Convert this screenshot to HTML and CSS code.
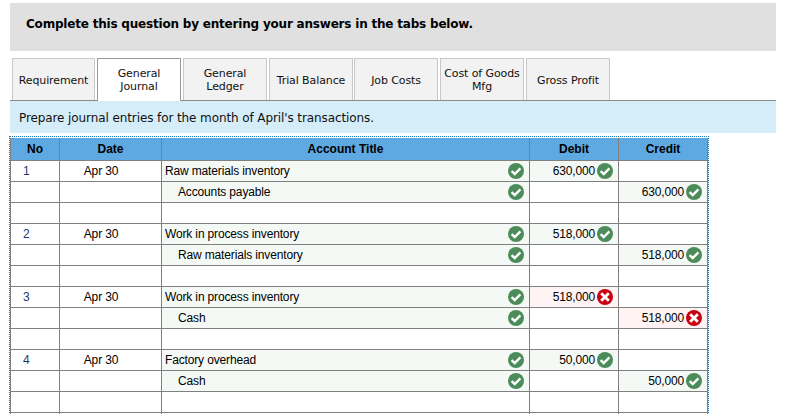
FILE: index.html
```html
<!DOCTYPE html>
<html lang="en">
<head>
<meta charset="utf-8">
<title>General Journal</title>
<link rel="stylesheet" href="styles.css">
</head>
<body>
<svg class="defs" width="0" height="0" aria-hidden="true">
  <symbol id="ok" viewBox="0 0 16 16">
    <circle cx="8" cy="8" r="8" fill="#4c8c5b"/>
    <path d="M3.6 8.2 6.7 11 12.4 5.4" fill="none" stroke="#fff" stroke-width="2.4"/>
  </symbol>
  <symbol id="bad" viewBox="0 0 16 16">
    <circle cx="8" cy="8" r="8" fill="#c8000f"/>
    <path d="M4.2 4.2 11.8 11.8M11.8 4.2 4.2 11.8" fill="none" stroke="#fff" stroke-width="2.8"/>
  </symbol>
</svg>
<main class="page">
  <header class="banner">Complete this question by entering your answers in the tabs below.</header>
  <nav class="tabs">
    <div class="tab">Requirement</div>
    <div class="tab active">General<br>Journal</div>
    <div class="tab">General<br>Ledger</div>
    <div class="tab">Trial Balance</div>
    <div class="tab">Job Costs</div>
    <div class="tab">Cost of Goods<br>Mfg</div>
    <div class="tab">Gross Profit</div>
  </nav>
  <p class="prompt">Prepare journal entries for the month of April's transactions.</p>
  <div class="sheet">
    <table class="journal">
      <colgroup><col class="c-no"><col class="c-date"><col class="c-title"><col class="c-amt"><col class="c-amt"></colgroup>
      <thead>
        <tr><th>No</th><th>Date</th><th>Account Title</th><th>Debit</th><th>Credit</th></tr>
      </thead>
      <tbody>
        <tr><td class="no">1</td><td class="date">Apr 30</td><td class="good"><div class="acct">Raw materials inventory<svg class="ic"><use href="#ok"/></svg></div></td><td class="good"><div class="amt">630,000<svg class="ic"><use href="#ok"/></svg></div></td><td></td></tr>
        <tr><td></td><td></td><td class="good"><div class="acct sub">Accounts payable<svg class="ic"><use href="#ok"/></svg></div></td><td></td><td class="good"><div class="amt">630,000<svg class="ic"><use href="#ok"/></svg></div></td></tr>
        <tr><td></td><td></td><td></td><td></td><td></td></tr>
        <tr><td class="no">2</td><td class="date">Apr 30</td><td class="good"><div class="acct">Work in process inventory<svg class="ic"><use href="#ok"/></svg></div></td><td class="good"><div class="amt">518,000<svg class="ic"><use href="#ok"/></svg></div></td><td></td></tr>
        <tr><td></td><td></td><td class="good"><div class="acct sub">Raw materials inventory<svg class="ic"><use href="#ok"/></svg></div></td><td></td><td class="good"><div class="amt">518,000<svg class="ic"><use href="#ok"/></svg></div></td></tr>
        <tr><td></td><td></td><td></td><td></td><td></td></tr>
        <tr><td class="no">3</td><td class="date">Apr 30</td><td class="good"><div class="acct">Work in process inventory<svg class="ic"><use href="#ok"/></svg></div></td><td class="wrong"><div class="amt">518,000<svg class="ic"><use href="#bad"/></svg></div></td><td></td></tr>
        <tr><td></td><td></td><td class="good"><div class="acct sub">Cash<svg class="ic"><use href="#ok"/></svg></div></td><td></td><td class="wrong"><div class="amt">518,000<svg class="ic"><use href="#bad"/></svg></div></td></tr>
        <tr><td></td><td></td><td></td><td></td><td></td></tr>
        <tr><td class="no">4</td><td class="date">Apr 30</td><td class="good"><div class="acct">Factory overhead<svg class="ic"><use href="#ok"/></svg></div></td><td class="good"><div class="amt">50,000<svg class="ic"><use href="#ok"/></svg></div></td><td></td></tr>
        <tr><td></td><td></td><td class="good"><div class="acct sub">Cash<svg class="ic"><use href="#ok"/></svg></div></td><td></td><td class="good"><div class="amt">50,000<svg class="ic"><use href="#ok"/></svg></div></td></tr>
        <tr><td></td><td></td><td></td><td></td><td></td></tr>
        <tr><td></td><td></td><td></td><td></td><td></td></tr>
      </tbody>
    </table>
  </div>
</main>
</body>
</html>
```
FILE: styles.css
```css
html, body {
  margin: 0;
  height: 414px;
  overflow: hidden;
  background: #fff;
}
.defs { display: block; height: 0; }
.page {
  width: 766px;
  padding: 3px 0 0 10px;
  font-family: "DejaVu Sans", Verdana, sans-serif;
  color: #111;
}
.banner {
  height: 48px;
  box-sizing: border-box;
  padding: 13px 0 0 16px;
  background: #e0e0e0;
  font-size: 12px;
  letter-spacing: -0.2px;
  line-height: 17px;
  font-weight: 700;
  color: #000;
}
.tabs {
  display: flex;
  gap: 2px;
  height: 43px;
  box-sizing: border-box;
  margin-top: 7px;
  padding-left: 2px;
  border-bottom: 1px solid #8a8a8a;
}
.tab {
  width: 84px;
  height: 42px;
  box-sizing: border-box;
  display: flex;
  align-items: center;
  justify-content: center;
  text-align: center;
  padding-top: 1px;
  border: 1px solid #c8c8c8;
  border-bottom: 0;
  background: #f2f2f2;
  font-size: 11px;
  letter-spacing: -0.1px;
  line-height: 13px;
}
.tab:nth-child(1) { width: 83px; }
.tab:nth-child(5) { margin-left: -1px; }
.tab.active {
  height: 43px;
  padding-bottom: 1px;
  background: #fff;
  border-color: #9a9a9a;
  position: relative;
  z-index: 1;
}
.prompt {
  margin: 0;
  height: 32px;
  box-sizing: border-box;
  padding: 2px 0 0 9px;
  background: #d5edf9;
  font-size: 12px;
  letter-spacing: -0.1px;
  line-height: 30px;
}
.sheet {
  width: 698px;
  height: 277px;
  margin: 3px 0 0 -1px;
  padding-top: 1px;
  overflow: hidden;
  border-top: 1px dotted #1273b8;
  border-left: 1px dotted #1273b8;
  border-right: 1px dotted #1273b8;
}
.journal {
  width: 698px;
  border-collapse: collapse;
  table-layout: fixed;
  font-family: "Liberation Sans", Arial, sans-serif;
  font-size: 12px;
  color: #000;
}
.c-no { width: 49px; }
.c-date { width: 102px; }
.c-title { width: 368px; }
.c-amt { width: 89px; }
.journal th,
.journal td {
  height: 21px;
  padding: 0;
  box-sizing: border-box;
  border: 1px solid #808080;
}
.journal td { letter-spacing: -0.15px; }
.journal thead th {
  height: 22px;
  background: #5fa9e3;
  border-top: 0;
  font-weight: 700;
  text-align: center;
}
.journal .no { padding-left: 12px; color: #1a3a6e; }
.journal .date { padding-right: 19px; text-align: center; }
.journal .good { background: #f4f9f5; }
.journal .wrong { background: #fff3f3; }
.acct {
  display: flex;
  align-items: center;
  justify-content: space-between;
  padding: 0 5px 0 3px;
}
.acct.sub { padding-left: 16px; }
.amt {
  display: flex;
  align-items: center;
  justify-content: flex-end;
  gap: 2px;
  padding-right: 5px;
}
.ic { width: 16px; height: 16px; flex: none; }
```
